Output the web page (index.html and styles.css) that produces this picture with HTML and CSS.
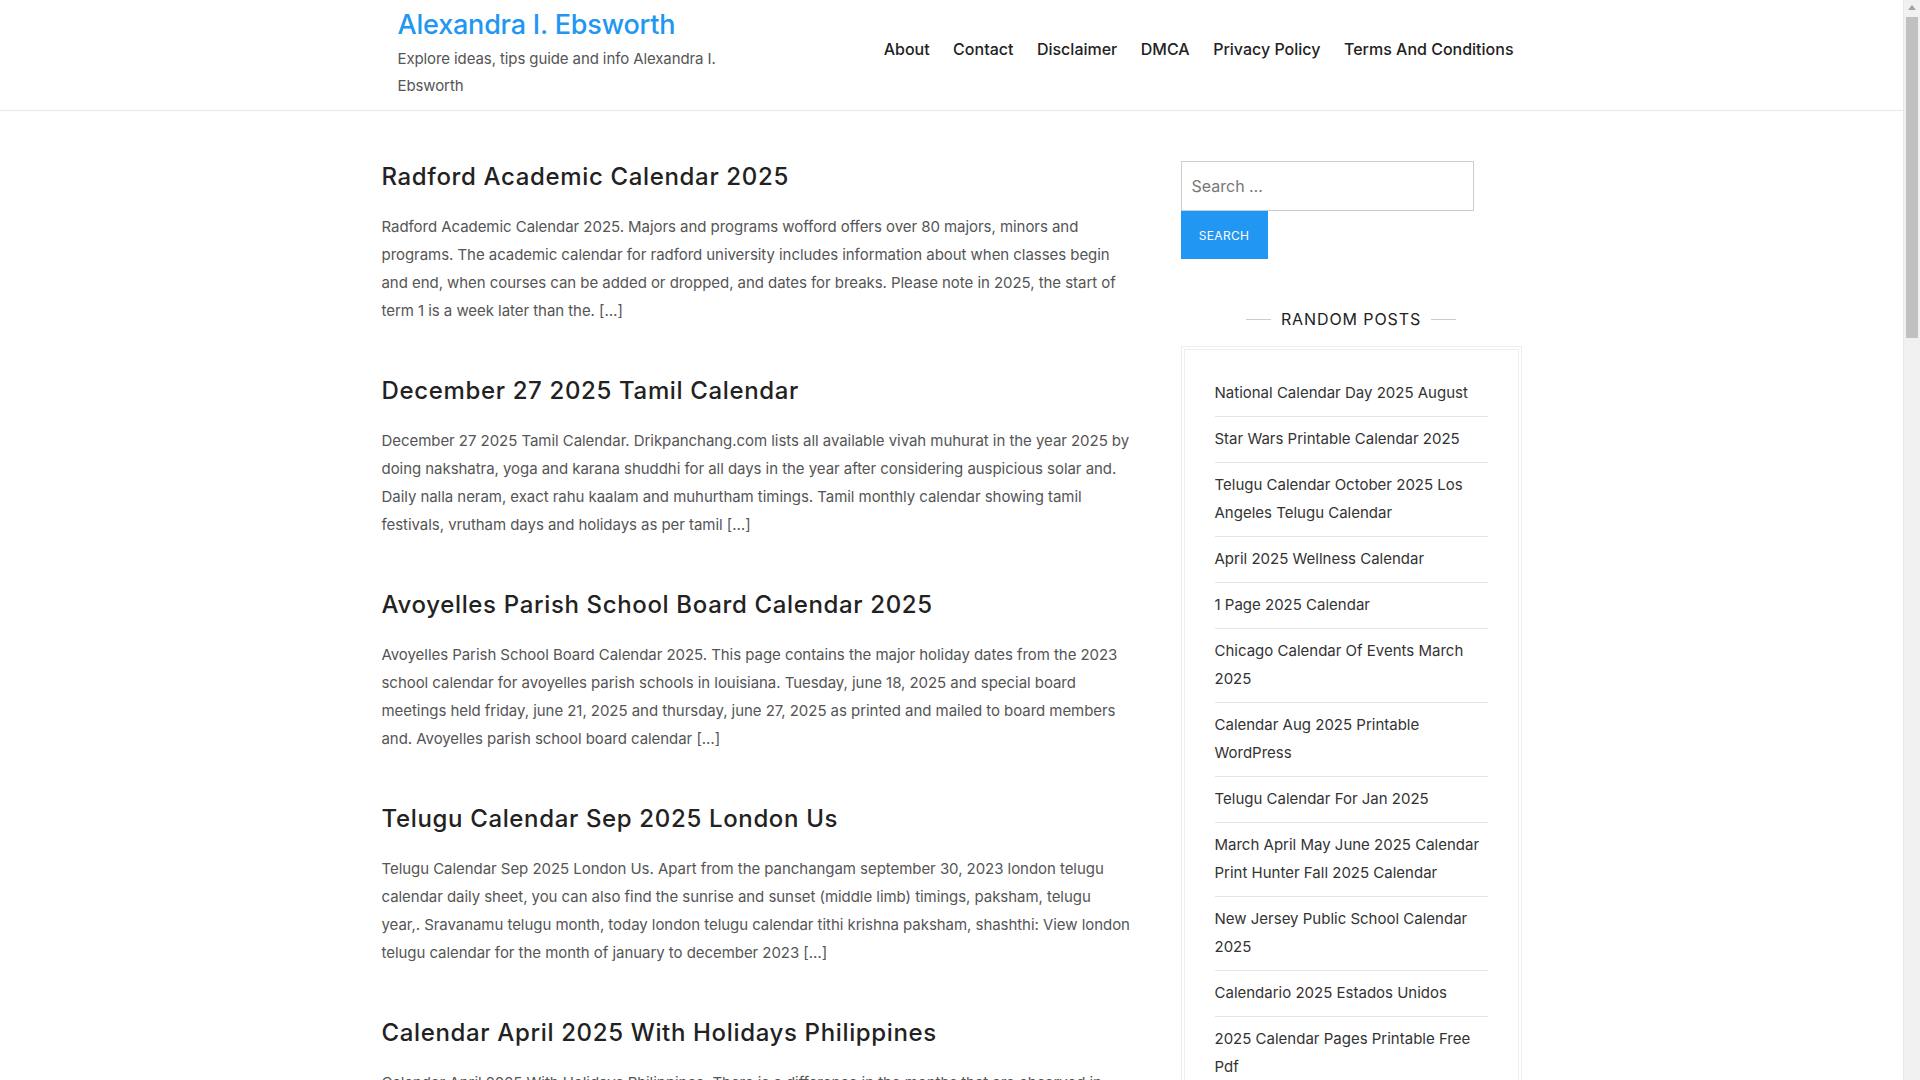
FILE: index.html
```html
<!DOCTYPE html>
<html lang="en">
<head>
<meta charset="utf-8">
<title>Alexandra I. Ebsworth</title>
<link rel="stylesheet" href="styles.css">
</head>
<body>
<header class="site-header">
  <div class="container header-inner">
    <div class="branding">
      <h1 class="site-title"><a href="#">Alexandra I. Ebsworth</a></h1>
      <p class="site-tagline">Explore ideas, tips guide and info Alexandra I. Ebsworth</p>
    </div>
    <nav class="main-nav">
      <a href="#">About</a>
      <a href="#">Contact</a>
      <a href="#">Disclaimer</a>
      <a href="#">DMCA</a>
      <a href="#">Privacy Policy</a>
      <a href="#">Terms And Conditions</a>
    </nav>
  </div>
</header>

<div class="container layout">
  <main class="posts">
    <article class="post">
      <h2 class="post-title"><a href="#">Radford Academic Calendar 2025</a></h2>
      <p class="post-excerpt">Radford Academic Calendar 2025. Majors and programs wofford offers over 80 majors, minors and programs. The academic calendar for radford university includes information about when classes begin and end, when courses can be added or dropped, and dates for breaks. Please note in 2025, the start of term 1 is a week later than the. […]</p>
    </article>
    <article class="post">
      <h2 class="post-title"><a href="#">December 27 2025 Tamil Calendar</a></h2>
      <p class="post-excerpt">December 27 2025 Tamil Calendar. Drikpanchang.com lists all available vivah muhurat in the year 2025 by doing nakshatra, yoga and karana shuddhi for all days in the year after considering auspicious solar and. Daily nalla neram, exact rahu kaalam and muhurtham timings. Tamil monthly calendar showing tamil festivals, vrutham days and holidays as per tamil […]</p>
    </article>
    <article class="post">
      <h2 class="post-title"><a href="#">Avoyelles Parish School Board Calendar 2025</a></h2>
      <p class="post-excerpt">Avoyelles Parish School Board Calendar 2025. This page contains the major holiday dates from the 2023 school calendar for avoyelles parish schools in louisiana. Tuesday, june 18, 2025 and special board meetings held friday, june 21, 2025 and thursday, june 27, 2025 as printed and mailed to board members and. Avoyelles parish school board calendar […]</p>
    </article>
    <article class="post">
      <h2 class="post-title"><a href="#">Telugu Calendar Sep 2025 London Us</a></h2>
      <p class="post-excerpt">Telugu Calendar Sep 2025 London Us. Apart from the panchangam september 30, 2023 london telugu calendar daily sheet, you can also find the sunrise and sunset (middle limb) timings, paksham, telugu year,. Sravanamu telugu month, today london telugu calendar tithi krishna paksham, shashthi: View london telugu calendar for the month of january to december 2023 […]</p>
    </article>
    <article class="post">
      <h2 class="post-title"><a href="#">Calendar April 2025 With Holidays Philippines</a></h2>
      <p class="post-excerpt">Calendar April 2025 With Holidays Philippines. There is a difference in the months that are observed in 2025 and the holidays that are celebrated across the country. Regular holidays and special non-working days for the year […]</p>
    </article>
  </main>

  <aside class="sidebar">
    <form class="search-form">
      <input class="search-field" type="search" placeholder="Search …">
      <button class="search-submit" type="button">Search</button>
    </form>

    <section class="widget">
      <h3 class="widget-title"><span>Random Posts</span></h3>
      <div class="widget-box">
        <ul class="widget-list">
          <li><a href="#">National Calendar Day 2025 August</a></li>
          <li><a href="#">Star Wars Printable Calendar 2025</a></li>
          <li><a href="#">Telugu Calendar October 2025 Los Angeles Telugu Calendar</a></li>
          <li><a href="#">April 2025 Wellness Calendar</a></li>
          <li><a href="#">1 Page 2025 Calendar</a></li>
          <li><a href="#">Chicago Calendar Of Events March 2025</a></li>
          <li><a href="#">Calendar Aug 2025 Printable WordPress</a></li>
          <li><a href="#">Telugu Calendar For Jan 2025</a></li>
          <li><a href="#">March April May June 2025 Calendar Print Hunter Fall 2025 Calendar</a></li>
          <li><a href="#">New Jersey Public School Calendar 2025</a></li>
          <li><a href="#">Calendario 2025 Estados Unidos</a></li>
          <li><a href="#">2025 Calendar Pages Printable Free Pdf</a></li>
          <li><a href="#">Printable 2025 Monthly Calendar With Holidays</a></li>
        </ul>
      </div>
    </section>
  </aside>
</div>

<div class="fake-scrollbar" aria-hidden="true">
  <span class="fake-scrollbar-arrow"></span>
  <span class="fake-scrollbar-thumb"></span>
</div>
</body>
</html>
```

FILE: styles.css
```css
* { box-sizing: border-box; }

html, body {
  margin: 0;
  padding: 0;
  background: #ffffff;
}

body {
  font-family: Inter, "Open Sans", "Liberation Sans", sans-serif;
  color: #555555;
  font-size: 15px;
  line-height: 28px;
  padding-right: 17px;
}

a { text-decoration: none; color: inherit; }

.container {
  width: 1140px;
  margin: 0 auto;
}

/* Header */
.site-header {
  border-bottom: 1px solid #e8e8e8;
}

.header-inner {
  display: flex;
  justify-content: space-between;
  align-items: flex-start;
  height: 110px;
}

.branding {
  padding-left: 16px;
  padding-top: 7px;
}

.site-title {
  margin: 0;
  font-size: 27px;
  line-height: 36px;
  font-weight: 500;
  letter-spacing: -0.2px;
  color: #2196f3;
}

.site-tagline {
  margin: 2px 0 0;
  font-size: 15px;
  line-height: 27px;
  letter-spacing: -0.1px;
  color: #555555;
  max-width: 330px;
}

.main-nav {
  display: flex;
  gap: 23.5px;
  margin-top: 37px;
  padding-right: 8px;
  font-size: 16px;
  line-height: 24px;
  font-weight: 500;
  color: #222222;
}

/* Layout */
.layout {
  display: grid;
  grid-template-columns: 1fr 341px;
  column-gap: 50px;
  padding-top: 50px;
}

.post {
  margin-bottom: 50px;
}

.post-title {
  margin: 0;
  font-size: 24px;
  line-height: 32px;
  font-weight: 500;
  letter-spacing: 0.65px;
  color: #222222;
}

.post-excerpt {
  margin: 20px 0 0;
  font-size: 15px;
  line-height: 28px;
  letter-spacing: -0.05px;
  color: #555555;
}

/* Sidebar */
.search-form {
  display: flex;
  flex-direction: column;
  align-items: flex-start;
}

.search-field {
  width: 293px;
  height: 50px;
  border: 1px solid #cccccc;
  padding: 0 10px;
  font-family: inherit;
  font-size: 16px;
  color: #555555;
  outline: none;
  border-radius: 0;
}

.search-field::placeholder { color: #777777; }

.search-submit {
  width: 87px;
  height: 48px;
  border: 0;
  background: #2196f3;
  color: #ffffff;
  font-family: inherit;
  font-size: 12px;
  font-weight: 400;
  text-transform: uppercase;
  letter-spacing: 0.3px;
  border-radius: 0;
}

.widget-title {
  margin: 48px 0 15px;
  display: flex;
  align-items: center;
  justify-content: center;
  gap: 10px;
  font-size: 16px;
  line-height: 24px;
  font-weight: 400;
  letter-spacing: 0.9px;
  text-transform: uppercase;
  color: #222222;
}

.widget-title::before,
.widget-title::after {
  content: "";
  width: 25px;
  height: 1px;
  background: #cccccc;
}

.widget-box {
  border: 1px solid #eeeeee;
  padding: 2px;
}

.widget-list {
  list-style: none;
  margin: 0;
  padding: 21px 30px 10px;
  border: 1px solid #eeeeee;
}

.widget-list li {
  padding: 8px 0 9px;
  border-bottom: 1px solid #e6e6e6;
  font-size: 15px;
  line-height: 28px;
  color: #333333;
}

/* Scrollbar drawn over the right edge, as in the reference capture */
.fake-scrollbar {
  position: fixed;
  top: 0;
  right: 0;
  width: 17px;
  height: 100vh;
  background: #f1f1f1;
  border-left: 1px solid #e8e8e8;
}

.fake-scrollbar-arrow {
  position: absolute;
  top: 5px;
  left: 4px;
  width: 0;
  height: 0;
  border-left: 4px solid transparent;
  border-right: 4px solid transparent;
  border-bottom: 5px solid #a3a3a3;
}

.fake-scrollbar-thumb {
  position: absolute;
  top: 17px;
  left: 2px;
  width: 12px;
  height: 321px;
  background: #c1c1c1;
}
```
